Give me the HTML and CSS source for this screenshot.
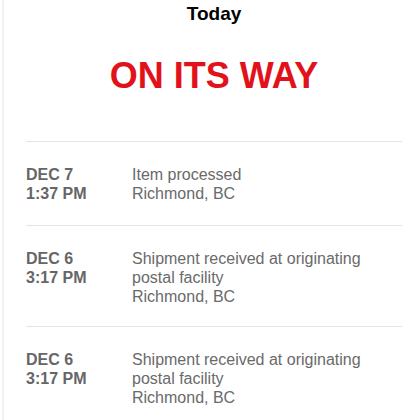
FILE: index.html
```html
<!DOCTYPE html>
<html lang="en">
<head>
<meta charset="utf-8">
<title>Tracking</title>
<link rel="stylesheet" href="styles.css">
</head>
<body>
<div class="card">
  <div class="inner">
    <header class="head">
      <div class="day">Today</div>
      <div class="status">ON ITS WAY</div>
    </header>
    <ul class="events">
      <li class="event">
        <div class="when">DEC 7<br>1:37 PM</div>
        <div class="what">Item processed<br>Richmond, BC</div>
      </li>
      <li class="event">
        <div class="when">DEC 6<br>3:17 PM</div>
        <div class="what">Shipment received at originating<br>postal facility<br>Richmond, BC</div>
      </li>
      <li class="event">
        <div class="when">DEC 6<br>3:17 PM</div>
        <div class="what">Shipment received at originating<br>postal facility<br>Richmond, BC</div>
      </li>
    </ul>
  </div>
</div>
</body>
</html>
```

FILE: styles.css
```css
html, body {
  margin: 0;
  padding: 0;
  background: #ffffff;
}
body {
  font-family: "Liberation Sans", Arial, Helvetica, sans-serif;
  overflow: hidden;
}
.card {
  margin-left: 2px;
  border-left: 2px solid #f1f1f1;
  min-height: 420px;
  padding-left: 22px;
}
.inner {
  width: 376px;
}
.head {
  display: flex;
  flex-direction: column;
  align-items: center;
  padding-top: 3px;
}
.day {
  font-size: 19px;
  font-weight: bold;
  line-height: 22px;
  color: #000000;
}
.status {
  margin-top: 31px;
  font-size: 36px;
  font-weight: bold;
  line-height: 40px;
  color: #e2121b;
  margin-bottom: 45px;
}
.events {
  list-style: none;
  margin: 0;
  padding: 0;
}
.event {
  display: grid;
  grid-template-columns: 106px 1fr;
  border-top: 1px solid #e4e4e4;
  padding: 23px 0 22px;
  line-height: 19px;
}
.event:nth-child(2) {
  padding-bottom: 20px;
}
.when {
  font-size: 16px;
  font-weight: bold;
  color: #666666;
}
.what {
  font-size: 16px;
  color: #6a6a6a;
}
```
